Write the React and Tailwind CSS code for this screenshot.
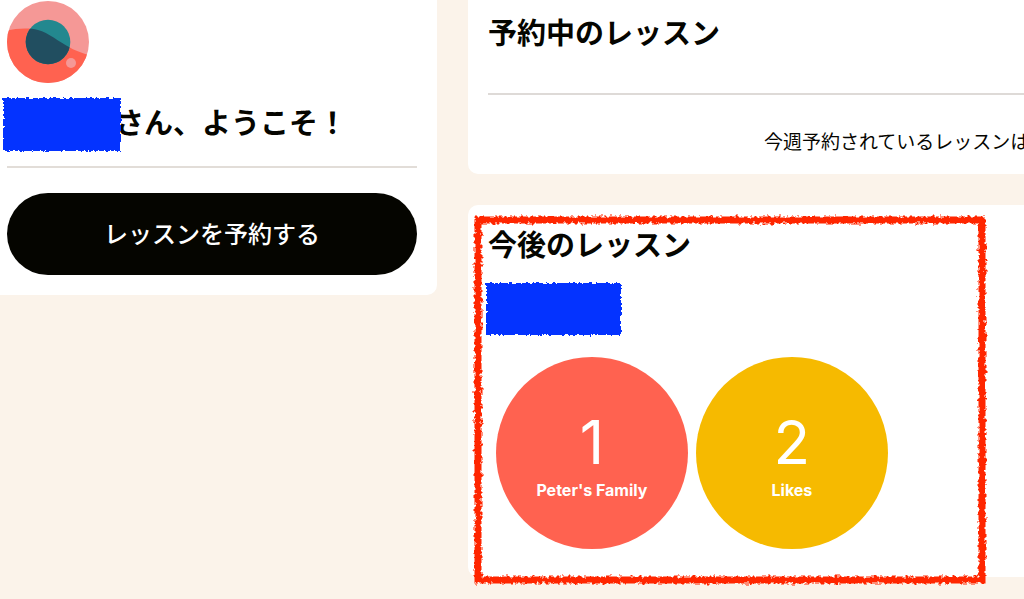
import React from "react";

const lessonCounts = [
  { label: "Peter's Family", count: 1, color: "bg-[#ff6250]" },
  { label: "Likes", count: 2, color: "bg-[#f6ba00]" },
];

const Avatar = () => (
  <svg viewBox="0 0 82 82" className="block size-[82px]" role="img" aria-label="avatar">
    <defs>
      <clipPath id="avatar-outer">
        <circle cx="41" cy="41" r="41" />
      </clipPath>
      <clipPath id="avatar-inner">
        <circle cx="41" cy="41" r="22.3" />
      </clipPath>
      <path id="avatar-wave" d="M0 29.5C9 27.5 22 26.5 31 29C46 33 58 48 82 54V82H0Z" />
    </defs>
    <g clipPath="url(#avatar-outer)">
      <rect width="82" height="82" fill="#f59896" />
      <use href="#avatar-wave" fill="#ff6250" />
    </g>
    <g clipPath="url(#avatar-inner)">
      <rect width="82" height="82" fill="#23888f" />
      <use href="#avatar-wave" fill="#214e60" />
    </g>
    <circle cx="64" cy="62" r="5" fill="#f59896" />
  </svg>
);

// Crayon edges shared by the name covers and the frame
const CrayonFilters = () => (
  <svg className="absolute size-0" aria-hidden="true">
    <filter id="crayon-fill" x="-5%" y="-10%" width="110%" height="120%" colorInterpolationFilters="sRGB">
      <feTurbulence type="fractalNoise" baseFrequency="0.3" numOctaves="2" seed="4" result="noise" />
      <feDisplacementMap in="SourceGraphic" in2="noise" scale="5" xChannelSelector="R" yChannelSelector="G" />
    </filter>
    <filter id="crayon-line" x="-5%" y="-5%" width="110%" height="110%" colorInterpolationFilters="sRGB">
      <feTurbulence type="fractalNoise" baseFrequency="0.28" numOctaves="2" seed="9" result="noise" />
      <feDisplacementMap in="SourceGraphic" in2="noise" scale="6" xChannelSelector="R" yChannelSelector="G" />
    </filter>
  </svg>
);

const NameCover = ({ className }) => (
  <svg className={`block shrink-0 overflow-visible ${className}`} aria-hidden="true">
    <rect width="100%" height="100%" fill="#0433ff" filter="url(#crayon-fill)" />
  </svg>
);

const Frame = () => (
  <svg
    className="absolute top-[15px] left-[10px] w-[504px] h-[360px] overflow-visible pointer-events-none"
    aria-hidden="true"
  >
    <rect width="100%" height="100%" fill="none" stroke="#ff2600" strokeWidth="7" filter="url(#crayon-line)" />
  </svg>
);

const CountCircle = ({ label, count, color }) => (
  <li
    className={`flex size-48 shrink-0 flex-col items-center rounded-full pt-[53px] font-[Inter,sans-serif] text-white ${color}`}
  >
    <span className="text-[60px] leading-[64px]">{count}</span>
    <span className="mt-1 text-[16px] leading-6 font-bold">{label}</span>
  </li>
);

export default function App() {
  return (
    <div className="min-h-screen overflow-hidden bg-[#fbf3ea] font-['Liberation_Sans','Noto_Sans_CJK_JP',sans-serif] text-[#050500]">
      <CrayonFilters />
      <main lang="ja" className="grid grid-cols-[11fr_14fr] items-start gap-[31px]">
        <aside className="rounded-br-[10px] bg-white pt-px pr-5 pb-5 pl-[7px]">
          <Avatar />
          <div className="mt-[15px] -ml-1 flex items-center">
            <NameCover className="relative z-10 h-[53px] w-[118px]" />
            <h1 className="-ml-1.5 text-[29px] leading-[53px] font-bold whitespace-nowrap">さん、ようこそ！</h1>
          </div>
          <hr className="mt-[15px] border-t-2 border-[#e2ddd8]" />
          <button
            type="button"
            className="mt-[25px] h-[82px] w-full rounded-full bg-[#050500] pt-0.5 text-[24px] leading-8 font-medium text-white"
          >
            レッスンを予約する
          </button>
        </aside>

        <div className="flex min-w-0 flex-col gap-[31px]">
          <section className="overflow-hidden rounded-bl-[10px] bg-white pt-3.5 pb-4 pl-5">
            <h2 className="text-[29px] leading-10 font-bold">予約中のレッスン</h2>
            <hr className="mt-[39px] border-t-2 border-[#dedad7]" />
            <p className="mt-8 pl-[276px] text-[19px] leading-[31px] whitespace-nowrap">
              今週予約されているレッスンは
            </p>
          </section>

          <section className="relative rounded-l-[10px] bg-white pt-[21px] pb-7 pl-5">
            <h2 className="text-[29px] leading-10 font-bold">今後のレッスン</h2>
            <NameCover className="mt-[17px] -ml-0.5 h-[52px] w-[135px]" />
            <ul className="mt-[22px] flex gap-2 pl-2">
              {lessonCounts.map((item) => (
                <CountCircle key={item.label} {...item} />
              ))}
            </ul>
            <Frame />
          </section>
        </div>
      </main>
    </div>
  );
}
